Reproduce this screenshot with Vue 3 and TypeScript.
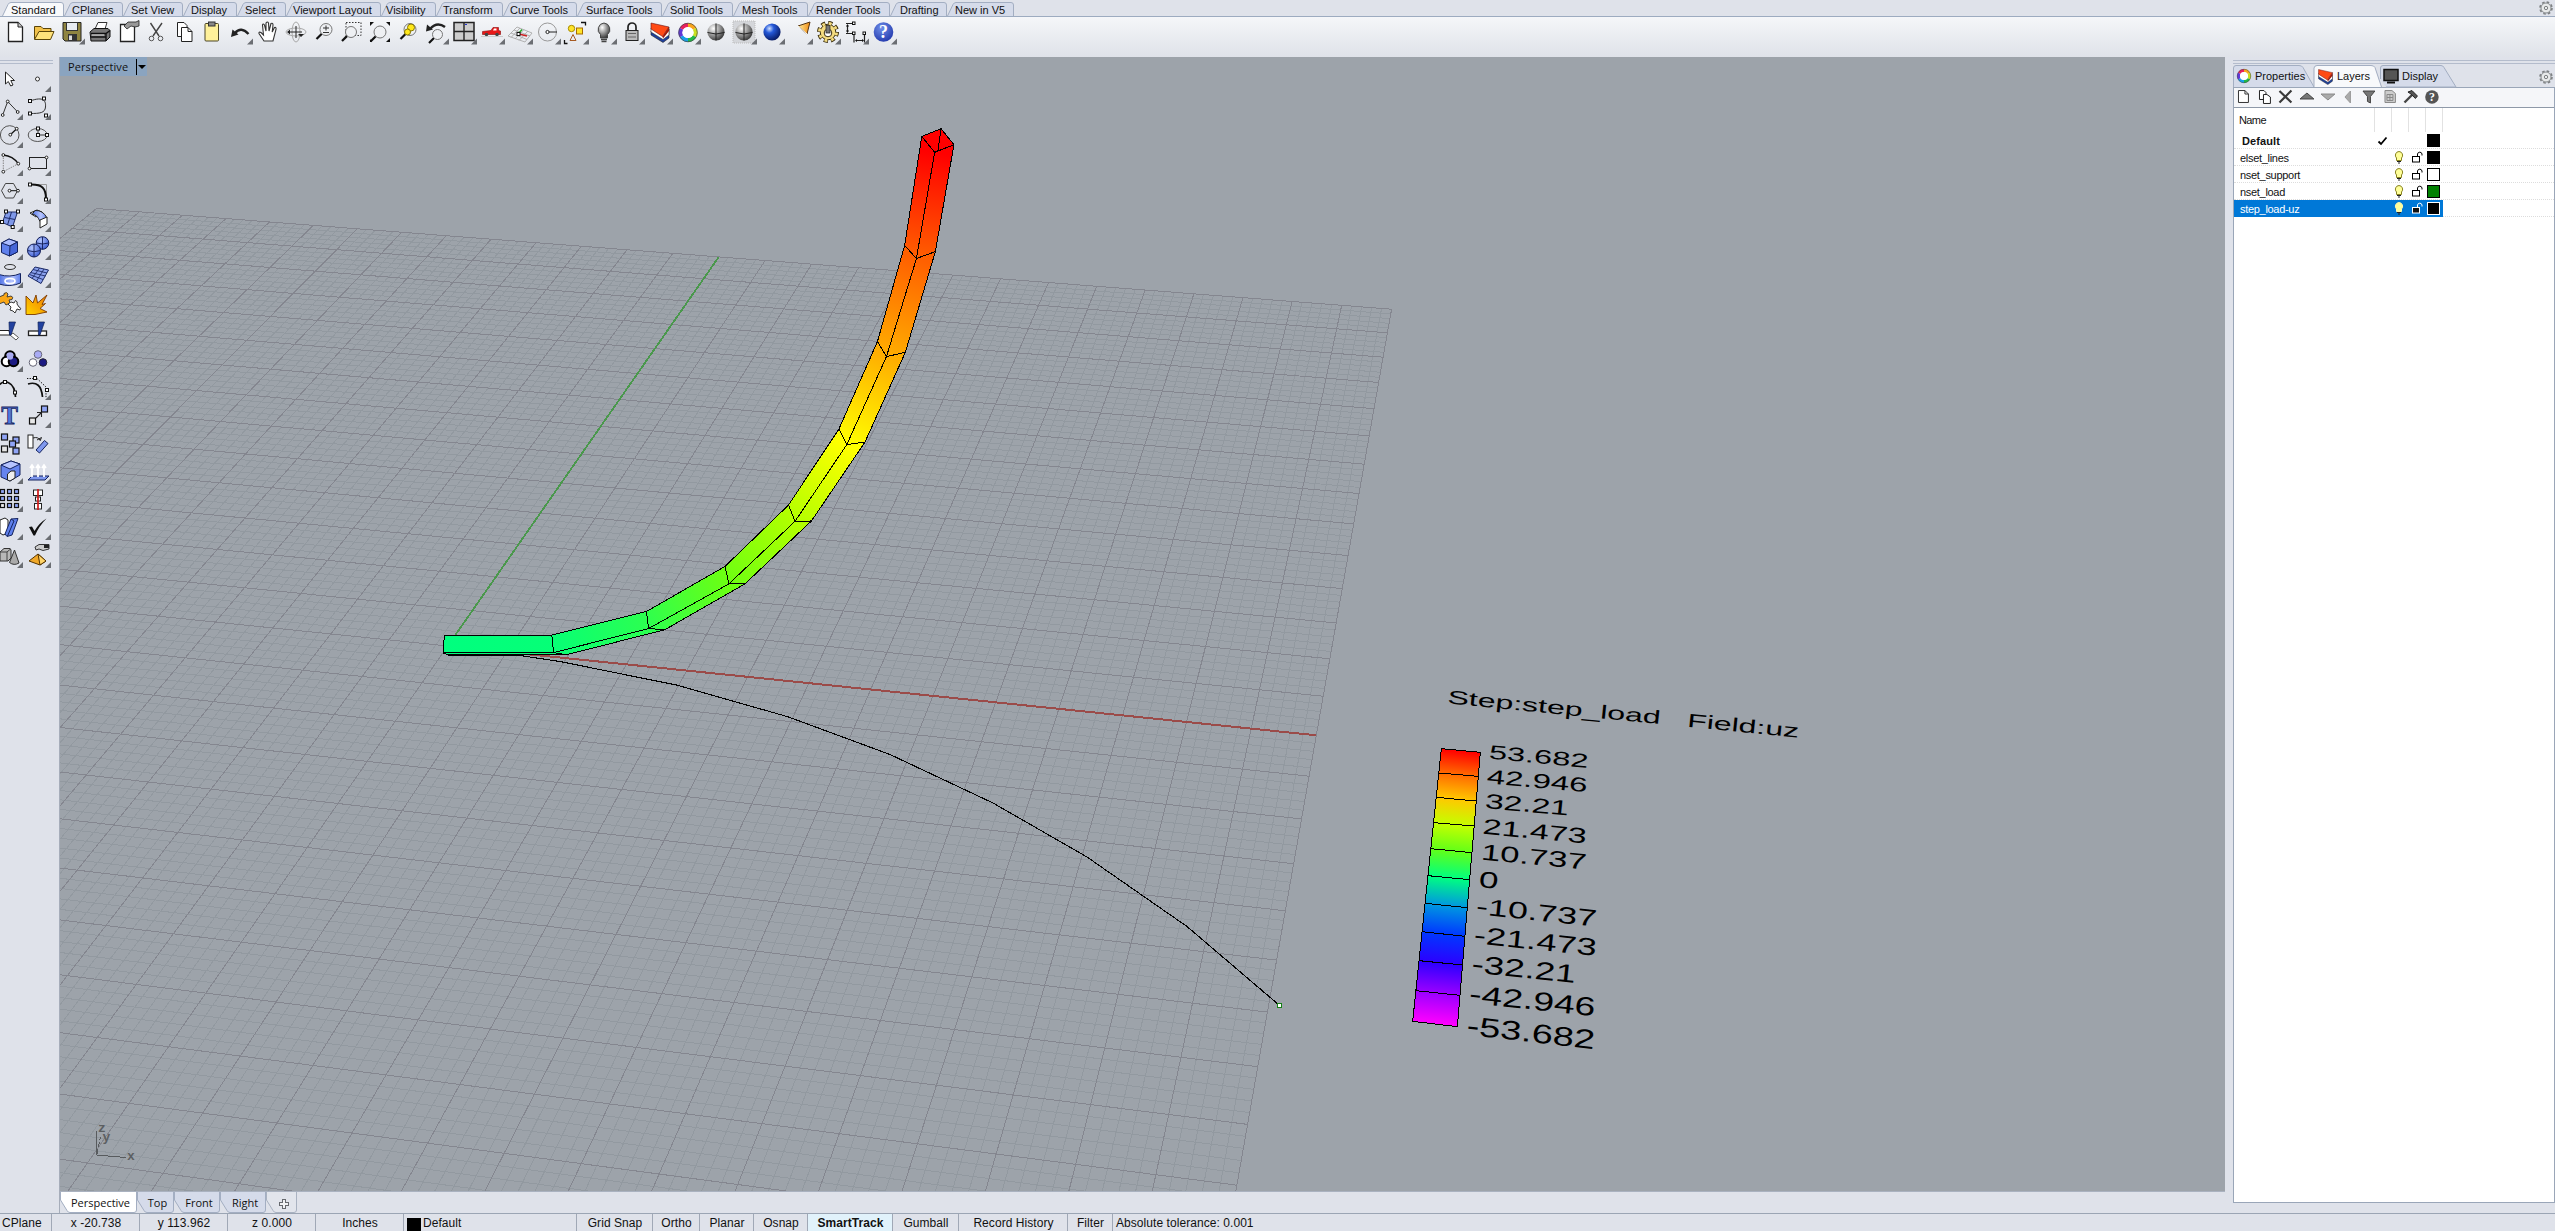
<script setup lang="ts">
type Pt = [number, number]

/* ---------- ribbon tabs ---------- */
const tabs: { label: string; w: number; pad: number }[] = [
  { label: 'Standard', w: 62, pad: 9 },
  { label: 'CPlanes', w: 59, pad: 8 },
  { label: 'Set View', w: 60, pad: 8 },
  { label: 'Display', w: 54, pad: 8 },
  { label: 'Select', w: 49, pad: 8 },
  { label: 'Viewport Layout', w: 95, pad: 7 },
  { label: 'Visibility', w: 55, pad: 5 },
  { label: 'Transform', w: 67, pad: 7 },
  { label: 'Curve Tools', w: 74, pad: 7 },
  { label: 'Surface Tools', w: 85, pad: 9 },
  { label: 'Solid Tools', w: 71, pad: 8 },
  { label: 'Mesh Tools', w: 75, pad: 9 },
  { label: 'Render Tools', w: 82, pad: 8 },
  { label: 'Drafting', w: 57, pad: 10 },
  { label: 'New in V5', w: 67, pad: 8 },
]
const tabPath = (w: number) => `M0.5 16L6 4.5Q7 2.5 9 2.5H${w - 3}Q${w - 0.5} 2.5 ${w - 0.5} 5V16`

/* ---------- icon artwork ---------- */
const tri = '<path d="M27 18.5V24.5H21Z" fill="#6b6e73"/>'
const triS = '<path d="M27 21V27H21Z" fill="#6b6e73"/>'
const lens = (x: number, y: number, r: number) =>
  `<path d="M${x - r * 0.7} ${y + r * 0.7}L${x - r - 3.5} ${y + r + 3.5}" stroke="#111" stroke-width="2.2"/><circle cx="${x}" cy="${y}" r="${r}" fill="#eef0f3" stroke="#777"/>`
const ball = (fill: string) =>
  `<circle cx="14" cy="12" r="8.6" fill="url(#${fill})"/>`
const layersArt =
  '<path d="M5 11V15L17 22.500L23 18V9L17 17Z" fill="#1d3f9c" stroke="#222" stroke-width=".6"/><path d="M5 8V12L17 19.500L23 15V7L17 14Z" fill="#fff" stroke="#333" stroke-width=".6"/><path d="M5 3V9L16.500 16.500L23 7Z" fill="#ff4a14" stroke="#611" stroke-width=".6"/><path d="M16.500 16.500L23 7V11L17 18.500Z" fill="#a01808"/>'
const wheelArt =
  '<g fill="none" stroke-width="4"><path d="M14 5A7.500 7.500 0 0 1 20.500 8.700" stroke="#f9a51c"/><path d="M20.500 8.700A7.500 7.500 0 0 1 20.500 16.200" stroke="#c8e020"/><path d="M20.500 16.200A7.500 7.500 0 0 1 14 20" stroke="#20b848"/><path d="M14 20A7.500 7.500 0 0 1 7.500 16.200" stroke="#18a0e8"/><path d="M7.500 16.200A7.500 7.500 0 0 1 7.500 8.700" stroke="#6038d8"/><path d="M7.500 8.700A7.500 7.500 0 0 1 14 5" stroke="#e8205c"/></g><circle cx="14" cy="12.500" r="5.600" fill="#fff"/><circle cx="14" cy="12.500" r="9.300" fill="none" stroke="#444" stroke-width=".7"/>'

const toolIcons: string[] = [
  '<path d="M6.500 2.500H16L20.500 7V21.500H6.500Z" fill="#fff" stroke="#222" stroke-width="1.300"/><path d="M16 2.500V7H20.500" fill="#ccc" stroke="#222"/>',
  '<path d="M4.500 19V6.500H11L13 8.500H21V12" fill="#f2c24a" stroke="#5a4408"/><path d="M4.500 19.500L9 11.500H24L20.500 19.500Z" fill="#ffe27a" stroke="#5a4408"/>',
  '<path d="M5 2.500H23V21H7L5 19Z" fill="#8f8440" stroke="#222"/><rect x="8.500" y="2.500" width="11" height="8" fill="#e8ecf2" stroke="#333"/><rect x="10" y="14" width="9" height="7" fill="#333"/><rect x="11" y="15.500" width="3" height="4.500" fill="#ddd"/>' + tri,
  '<path d="M9 9L12 2.500H21L19 9Z" fill="#fff" stroke="#333"/><path d="M4 12L8 8.500H22L24 10.500V17L20 21H5Z" fill="#777" stroke="#111"/><path d="M5 13.500H20L24 10.500M5 17H20M20 13V21" stroke="#111" fill="none" stroke-width="1.400"/><path d="M6 15H18" stroke="#ddd"/>',
  '<path d="M6.500 4.500H20.500V21.500H6.500Z" fill="#fff" stroke="#222" stroke-width="1.300"/><path d="M10 6L14 2H22L25 .5V6L21 7L17 6L13 9Z" fill="#999" stroke="#222" stroke-width=".8"/>',
  '<path d="M8.500 3L17 16M20 3L11 16" stroke="#444" stroke-width="1.400"/><circle cx="9.500" cy="18.500" r="2.300" fill="none" stroke="#555"/><circle cx="18.500" cy="18.500" r="2.300" fill="none" stroke="#555"/>',
  '<path d="M7.500 2.500H14L17 5.500V16.500H7.500Z" fill="#fff" stroke="#222"/><path d="M11.500 7.500H18L22 11.500V21.500H11.500Z" fill="#fff" stroke="#222"/><path d="M18 7.500V11.500H22" fill="none" stroke="#222"/>',
  '<rect x="7" y="3.500" width="13.500" height="17.500" rx="1" fill="#fff19a" stroke="#4a4526"/><rect x="10.500" y="2" width="6.500" height="4" fill="#888" stroke="#333"/>',
  '<path d="M9 13Q15 6 22.500 14" fill="none" stroke="#222" stroke-width="2.400"/><path d="M5 17L6.500 9.500L12.500 14.500Z" fill="#222"/>' + tri,
  '<path d="M10 21L5 13.500Q4.500 11.500 7 12.500L9.500 15L8.500 5Q9 3 10.500 5L12 11L12 3Q13.500 1 14.500 3L15 11L17 3.500Q19 2.500 19 5L18.200 12L20.500 7.500Q22.500 7 22 9.500L19 21Z" fill="#fff" stroke="#333" stroke-width="1.100"/>',
  '<ellipse cx="14" cy="12" rx="10" ry="4" fill="none" stroke="#aaa"/><ellipse cx="14" cy="12" rx="4" ry="10" fill="none" stroke="#aaa"/><path d="M8 12H20M14 6V18" stroke="#222"/><path d="M8 9.500V14.500L5 12ZM16 14H22L19 17Z" fill="#222"/>',
  lens(16, 9.500, 6) + '<path d="M13 8H19M16 5.500V10.500M13 12.500H19" stroke="#333"/>',
  '<rect x="8" y="2.500" width="15" height="13" fill="none" stroke="#333" stroke-dasharray="1.500 1.500"/>' + lens(13, 12, 5.500),
  lens(14, 12, 6) + '<path d="M4 2H8L4 6ZM24 2H20L24 6ZM24 22H20L24 18ZM4 22H6L4 19Z" fill="#111"/>',
  lens(16, 9.500, 6) + '<circle cx="17" cy="7.500" r="3.500" fill="#ffe81a" stroke="#887700"/><circle cx="13.500" cy="12" r="3" fill="#ffe81a" stroke="#887700"/>',
  lens(15.500, 14.500, 5) + '<path d="M8 9Q15 1 23 7" fill="none" stroke="#222" stroke-width="2.400"/><path d="M4 11.500L5 4.500L11 9.500Z" fill="#222"/>' + tri,
  '<rect x="4" y="2.500" width="20" height="18" fill="#ccc" stroke="#222" stroke-width="1.500"/><path d="M14 2.500V20.500M4 11.500H24" stroke="#222" stroke-width="1.400"/><path d="M15 4.500H17" stroke="#23c"/>' + tri,
  '<path d="M4.500 14.500V11.500L13 10.500L15 7.500H20.500V10.500L22.500 11V14.500Z" fill="#e81818" stroke="#8a0808" stroke-width=".6"/><path d="M16 8.500H18.500V10.500H15Z" fill="#fff"/><circle cx="8.500" cy="14.500" r="1.800" fill="#444"/><circle cx="19" cy="14.500" r="1.800" fill="#444"/><path d="M3 16.500H25" stroke="#bbb" stroke-width=".7"/>' + tri,
  '<path d="M2 16L11 7L26 13L19 22ZM5 17.500L14 8M9 19L18 9.500M13 20.500L22 11M5 13L21 19.500M8 10L24 16" fill="none" stroke="#aaa" stroke-width=".9"/><path d="M13 14L21 16" stroke="#c22" stroke-width="1.400"/><path d="M13 13L16 9.500" stroke="#2a2" stroke-width="1.400"/><rect x="11" y="12.500" width="3" height="3" fill="#fff" stroke="#111"/>' + tri,
  '<circle cx="13.500" cy="12" r="9" fill="none" stroke="#999"/><path d="M13.500 12H23" stroke="#222"/><circle cx="13.500" cy="12" r="1.600" fill="#fff" stroke="#222"/>' + tri,
  '<circle cx="9.500" cy="8.500" r="3.200" fill="#ffe428" stroke="#a68a00"/><rect x="14.500" y="8" width="6" height="6" fill="#ffe428" stroke="#a66a00"/><path d="M11 14.500L14 20.500H8Z" fill="none" stroke="#a65a22"/><path d="M19 2.500H23.500V5.500M2.500 20V23.500H5.500" fill="none" stroke="#111" stroke-width="1.300"/>' + tri,
  '<path d="M14 3A6.500 6.500 0 0 1 17.500 14.500V18H10.500V14.500A6.500 6.500 0 0 1 14 3Z" fill="url(#gray)" stroke="#444"/><path d="M11 19.500H17M11.500 21.500H16.500" stroke="#444" stroke-width="1.500"/>' + tri,
  '<path d="M10 11V7A4 4 0 0 1 18 7V11" fill="none" stroke="#222" stroke-width="1.700"/><rect x="8" y="10.500" width="12" height="10" fill="#bbb" stroke="#222"/><path d="M10 13.500H18M10 17H18" stroke="#666"/>' + tri,
  layersArt + tri,
  wheelArt + tri,
  ball('gray') + '<path d="M14 3.500V20.500M5.500 12.500Q14 15.500 22.500 12.500" fill="none" stroke="#222"/>',
  '<rect x="3" y="1" width="22" height="22" fill="#d4d6da" stroke="#bbb" stroke-dasharray="1 1"/>' + ball('gray') + '<path d="M14 3.500V20.500M5.500 12.500Q14 15.500 22.500 12.500" fill="none" stroke="#222"/>' + tri,
  ball('blue') + tri,
  '<path d="M12 6L24 2L21 14Z" fill="url(#orange)" stroke="#553311"/><path d="M12 6L21 14" stroke="#fff"/>' + tri,
  '<circle cx="14" cy="12" r="8.800" fill="none" stroke="#3a2e10" stroke-width="4.400" stroke-dasharray="4 2.910"/><circle cx="14" cy="12" r="7.800" fill="#f4dc80" stroke="#3a2e10"/><circle cx="14" cy="12" r="8.600" fill="none" stroke="#f4dc80" stroke-width="2.800" stroke-dasharray="2.800 3.950" stroke-dashoffset="-.6"/><circle cx="14" cy="13" r="3.800" fill="#fff" stroke="#3a2e10"/><rect x="12" y="5.500" width="4" height="7.500" fill="#777" stroke="#222" stroke-width=".7"/>' + tri,
  '<path d="M4 3.500H11M4 13.500H11M5.500 5V12M12 13V22.500M22.500 13V22.500M14 20.500H21" fill="none" stroke="#222" stroke-width="1.200"/><path d="M5.500 4L4 6.500H7ZM5.500 13L4 10.500H7ZM13 20.500L15 19V22ZM22 20.500L20 19V22Z" fill="#111"/><g fill="#fff" stroke="#111"><rect x="10.500" y="2" width="2.500" height="2.500"/><rect x="10.500" y="12" width="2.500" height="2.500"/><rect x="21" y="12" width="2.500" height="2.500"/></g>' + tri,
  '<circle cx="13.500" cy="12" r="9.800" fill="url(#help)"/><text x="13.500" y="18" text-anchor="middle" font-family="Liberation Serif, serif" font-weight="bold" font-size="18" fill="#fff">?</text>' + tri,
]

const sq = (x: number, y: number) => `<rect x="${x - 1.5}" y="${y - 1.5}" width="3" height="3" fill="#fff" stroke="#111"/>`
const dot = (x: number, y: number) => `<circle cx="${x}" cy="${y}" r="1.400" fill="#fff" stroke="#111" stroke-width=".9"/>`
const bx = (x: number, y: number, f: string, s = 6) => `<rect x="${x}" y="${y}" width="${s}" height="${s}" fill="${f}" stroke="#111" stroke-width="1.200"/>`
const B = '#8fa4f6'

const sideIcons: string[][] = [
  [
    '<path d="M9.500 7V19L12.300 16.500L14.700 21L17 20L14.800 15.500H18.500Z" fill="#fff" stroke="#222"/>',
    '<circle cx="13.500" cy="14" r="2" fill="#fff" stroke="#333"/>' + triS,
  ],
  [
    '<path d="M6.700 22L11.700 8.500L21.700 19" fill="none" stroke="#333"/>' + dot(6.700, 22) + dot(11.700, 8.500) + dot(21.700, 19) + triS,
    '<path d="M6 8C20 3 22 8 21.500 14S16 20.500 6 20.500" fill="none" stroke="#333"/>' + sq(6, 8) + sq(20, 5.500) + sq(6, 20.500) + sq(22, 22.500) + triS,
  ],
  [
    '<circle cx="13.700" cy="14" r="9.300" fill="none" stroke="#555"/><path d="M14.300 13.700L20.700 7.700" stroke="#111" stroke-width="1.200"/>' + dot(14.300, 13.700) + dot(20.700, 7.700) + triS,
    '<ellipse cx="13.700" cy="14" rx="9.500" ry="6.500" fill="none" stroke="#555"/><path d="M14 7.500V14H23" stroke="#333" fill="none"/>' + sq(14, 7.500) + sq(14, 14) + sq(23, 14) + triS,
  ],
  [
    '<path d="M7.300 6Q17 7 22.300 14.700" fill="none" stroke="#111" stroke-width="1.300"/><path d="M7.300 6V22.700L22.300 14.700" fill="none" stroke="#888" stroke-dasharray="1.500 1"/>' + dot(7.300, 6) + dot(7.300, 22.700) + dot(22.300, 14.700) + triS,
    '<rect x="5.500" y="8.500" width="17" height="11" fill="none" stroke="#222"/>' + dot(5.500, 19.500) + dot(22.500, 8.500) + triS,
  ],
  [
    '<path d="M5.500 13.700L9.500 6.500H17.500L21.500 13.700L17.500 21H9.500Z" fill="none" stroke="#444"/><path d="M13.500 13.700H22" stroke="#111"/>' + dot(13.500, 13.700) + dot(22, 13.700) + triS,
    '<path d="M7 7.500H22.500V21" fill="none" stroke="#999"/><path d="M6 7.500C18 7 22 11 22 22" fill="none" stroke="#111" stroke-width="1.900"/>' + sq(6, 7.500) + sq(22, 22.500) + triS,
  ],
  [
    '<path d="M10 7H21.500L16.500 22L6.500 17.500Z" fill="#7f98e8" stroke="#1c2a66"/><path d="M15.500 7L11.500 20M8.500 12.500L19 14.500" stroke="#1c2a66"/>' + sq(10, 6.500) + sq(22, 6.500) + sq(16.700, 22) + sq(6, 17) + triS,
    '<path d="M6 8L13 5L18 7L12 12Z" fill="#fff" stroke="#222"/><path d="M11 5.500Q19 5 23 13L16 16.500Q13 9 8 9.500Z" fill="url(#cube)" stroke="#222"/><path d="M16 15L23 12V19L16 23Z" fill="#fff" stroke="#222"/>' + triS,
  ],
  [
    '<path d="M5.500 10L13 6L21.500 9V19L13.500 23L5.500 19.500Z" fill="#5f80ec" stroke="#14235e"/><path d="M5.500 10L13 6L21.500 9L14 13Z" fill="#a9bbff" stroke="#14235e"/><path d="M14 13L21.500 9V19L13.500 23Z" fill="#4666d8" stroke="#14235e"/>' + triS,
    '<circle cx="18.500" cy="10" r="6.300" fill="url(#blueS)" stroke="#111c55"/><circle cx="10" cy="17.500" r="6.500" fill="url(#blueS)" stroke="#111c55"/><path d="M18.500 4V16.500M12.500 10Q18.500 12 24.500 10M10 11V24M3.500 17.500Q10 20 16.500 17.500" stroke="#111c55" stroke-width=".9" fill="none"/>' + triS,
  ],
  [
    '<ellipse cx="14" cy="6" rx="5.500" ry="2.500" fill="none" stroke="#333"/><path d="M3 13.500Q14 17 24.500 12.500V22Q14 26.500 3 23Z" fill="url(#cube)" stroke="#14235e"/><ellipse cx="14" cy="20" rx="5" ry="2.500" fill="none" stroke="#fff" stroke-width="1.700"/>' + triS,
    '<path d="M4 15L11 6L24.500 9L17 22.500Z" fill="#8ba2ee" stroke="#1c2a66"/><path d="M8 17.500L15.500 7M12.500 20L20 8M6.500 11.500L21.500 15M9 8.500L23 12M5.500 13.500L19 18.500" stroke="#1c2a66" stroke-width=".9"/>' + triS,
  ],
  [
    '<path d="M3 8L8 6L8 4.500Q11 2.500 12 5L11 8L15 7Q18 8 16 10.500L13 11L14 14L10 16L8 13L3 15Z" fill="#f9a616" stroke="#333" stroke-width=".9"/><path d="M12 15L15 13L18 14L19.500 11.500Q22 12.500 21 15L23 18Q26 19 24 21L21 20L19 24L17 22L14 21L15 18Z" fill="#fff" stroke="#222" stroke-width=".9"/>',
    '<path d="M2 7L9 14L12 6L13.500 14L23 6L18 15.500L21.500 14.500L16 19.500L23 23L11 25.500H2Z" fill="url(#burst)" stroke="#7a3a00" stroke-width=".9"/>',
  ],
  [
    '<path d="M3 13.500H13L14 18H3Z" fill="#fff" stroke="#222"/><path d="M17 16L22.500 20.500L20 23L14 18Z" fill="#fff" stroke="#555"/><path d="M13 5H19.500L15 18H13.500Z" fill="#2242a0" stroke="#0f1f55" stroke-width=".7"/>',
    '<rect x="4.500" y="14" width="18" height="4.500" fill="#fff" stroke="#222" stroke-width="1.300"/><path d="M14 5H20.500L16 18H14.500Z" fill="#2242a0" stroke="#0f1f55" stroke-width=".7"/>',
  ],
  [
    '<circle cx="14" cy="11" r="4.800" fill="#b4b6f4" stroke="#000" stroke-width="2"/><circle cx="10.500" cy="16.500" r="4.800" fill="#fff" stroke="#000" stroke-width="2"/><circle cx="17.500" cy="16.500" r="4.800" fill="#1b1a82" stroke="#000" stroke-width="2"/><circle cx="14" cy="11.500" r="3.200" fill="#a7a9f0"/>' + triS,
    '<circle cx="14" cy="9.500" r="3.800" fill="#a9abf4" stroke="#667"/><circle cx="9" cy="17.500" r="3.800" fill="#fff" stroke="#667"/><circle cx="19" cy="17.500" r="3.800" fill="#1b1a82" stroke="#223"/>',
  ],
  [
    '<path d="M3 12Q8 7 13 10Q19 13 19.500 24" fill="none" stroke="#111" stroke-width="1.700"/>' + sq(9, 9) + sq(19, 19.500),
    '<path d="M3 5.500H13L22 14V25" fill="none" stroke="#111" stroke-dasharray="1.300 1.300"/><path d="M4 11Q17 7 18.500 24" fill="none" stroke="#111" stroke-width="1.700"/>' + sq(11, 5) + sq(23, 17) + triS,
  ],
  [
    '<text x="13.500" y="23" text-anchor="middle" font-family="Liberation Serif, serif" font-weight="bold" font-size="25" fill="#5377dd" stroke="#14235e" stroke-width=".8">T</text>',
    bx(5.500, 17, '#e8e8e8') + bx(17.500, 5, B) + '<path d="M12 17L17 12M13 11.500H17.500V16" fill="none" stroke="#222" stroke-width="1.100"/>' + triS,
  ],
  [
    bx(5.500, 5, B) + bx(17, 8, B) + bx(13.500, 12, B) + bx(5.500, 17, '#e4e4e4') + bx(17, 19, B),
    '<rect x="4" y="6" width="5" height="13" fill="#fff" stroke="#222"/><path d="M9 9Q14 7.500 16 11M16 12L17.500 8.500L13 11" fill="none" stroke="#222"/><path d="M12 21L20.500 11.500L24 14.500L15.500 24Z" fill="#7f98ee" stroke="#14235e"/>',
  ],
  [
    '<path d="M5 8L15 4L24 7V18L14 24L5 20Z" fill="#6684ee" stroke="#14235e"/><path d="M5 8L15 4L24 7L14 12Z" fill="#b6c4ff" stroke="#14235e"/><path d="M11.500 17L15 14H19V21L14 24L11.500 23Z" fill="#eee" stroke="#222"/>' + triS,
    '<path d="M4 23L8 19H25L21 23Z" fill="#7f98ee" stroke="#14235e"/><path d="M8 20V8M14 20V8M20 20V8M6 11L8 8L10 11M12 11L14 8L16 11M18 11L20 8L22 11" stroke="#fff" stroke-width="1.800" fill="none"/>' + triS,
  ],
  [
    [4.500, 11.500, 18.500].map((x) => [4.500, 11.500, 18.500].map((y) => bx(x, y, x < 6 && y > 15 ? '#eee' : '#8fa6f8', 4)).join('')).join('') + triS,
    '<rect x="9.500" y="5" width="9" height="5.500" fill="#fff" stroke="#222"/><rect x="11.500" y="12" width="5" height="4" fill="#fff" stroke="#222"/><rect x="10.500" y="18.500" width="7" height="5.500" fill="#fff" stroke="#222"/><path d="M14 4V25" stroke="#d01818" stroke-width="1.700"/>' + triS,
  ],
  [
    '<path d="M4 7L9 5L12 7V20L7 22L4 20Z" fill="#fff" stroke="#222"/><path d="M15 6L22 5.500L16 22L11 23.500L9 21Z" fill="#5f80ec" stroke="#14235e"/><path d="M15 6L18 8L11.500 23" stroke="#14235e" fill="none"/>' + triS,
    '<path d="M5 14L8 13.500L10.500 18Q15 10 22.500 5.500Q15 13 11 22.500H9.500Z" fill="#111"/>' + triS,
  ],
  [
    '<path d="M4 11L8 7.500H14L15 9V17L12 20H4Z" fill="#b8b8b8" stroke="#333"/><path d="M4 11H11L14.500 8M11 11V20" stroke="#444" fill="none"/><path d="M18.500 9L23 22Q18 25 13.500 21.500Z" fill="#aaa" stroke="#333"/>' + triS,
    '<path d="M5 20L14 13L22 20L16 24Z" fill="#f0a828" stroke="#553300"/><path d="M14 13L22 20L16 24Z" fill="#ffd468" stroke="#553300"/><path d="M11 6L15 3.500H25V8L19 9.500L15 8L12 9Z" fill="#ccc" stroke="#222" stroke-width=".9"/><path d="M20 4H25V7H20Z" fill="#222"/>' + triS,
  ],
]

const gearArt =
  '<g fill="none" stroke="#7d8082"><circle cx="8" cy="8" r="6" stroke-width="1.600" stroke-dasharray="2.600 2.100"/><circle cx="8" cy="8" r="5" fill="#e8eaea" stroke-width=".9"/><circle cx="8" cy="8" r="1.700"/></g>'

/* ---------- perspective ground grid ---------- */
const HALF = 14
// world (u, v) in major cells  ->  viewport pixels
const anchors: { w: Pt; s: Pt }[] = [
  { w: [-14, 14], s: [96.7, 208.3] },
  { w: [-7, 14], s: [401.5, 232.1] },
  { w: [0, 14], s: [718.7, 257.1] },
  { w: [8, 14], s: [1096.7, 286.5] },
  { w: [14, 14], s: [1391.7, 309.4] },
  { w: [14, 7], s: [1359, 493] },
  { w: [14, 0], s: [1316.3, 735] },
  { w: [14, -9], s: [1236.8, 1185.3] },
  { w: [0, 0], s: [447.8, 646.4] },
]

function solve(m: number[][]): number[] {
  const n = m.length
  for (let i = 0; i < n; i++) {
    let p = i
    for (let r = i + 1; r < n; r++) if (Math.abs(m[r][i]) > Math.abs(m[p][i])) p = r
    ;[m[i], m[p]] = [m[p], m[i]]
    for (let r = 0; r < n; r++) {
      if (r === i) continue
      const f = m[r][i] / m[i][i]
      for (let c = i; c <= n; c++) m[r][c] -= f * m[i][c]
    }
  }
  return m.map((row, i) => row[n] / row[i])
}

// least-squares homography: normal equations of the stacked anchor rows
const rows = anchors.flatMap(({ w: [u, v], s: [x, y] }) => [
  [u, v, 1, 0, 0, 0, -x * u, -x * v, x],
  [0, 0, 0, u, v, 1, -y * u, -y * v, y],
])
const normal = Array.from({ length: 8 }, (_, i) =>
  Array.from({ length: 9 }, (_, j) => rows.reduce((sum, r) => sum + r[i] * r[j], 0)),
)
const H = solve(normal)
function project(u: number, v: number): Pt {
  const d = H[6] * u + H[7] * v + 1
  return [(H[0] * u + H[1] * v + H[2]) / d, (H[3] * u + H[4] * v + H[5]) / d]
}
const seg = (a: Pt, b: Pt) => `M${a[0].toFixed(1)} ${a[1].toFixed(1)}L${b[0].toFixed(1)} ${b[1].toFixed(1)}`

let minor = ''
let major = ''
for (let i = -HALF * 5; i <= HALF * 5; i++) {
  const k = i / 5
  const d = seg(project(k, -HALF), project(k, HALF)) + seg(project(-HALF, k), project(HALF, k))
  if (i % 5 === 0) major += d
  else minor += d
}
const axisX = seg(project(0, 0), project(HALF, 0))
const axisY = seg(project(0, 0), project(0, HALF))

/* ---------- deformed beam ---------- */
const stations: { a: Pt; b: Pt; c: Pt; color: string }[] = [
  { a: [68, 1472], b: [65, 1521], c: [80, 1526], color: '#00ff7f' },
  { a: [369, 1472], b: [374, 1520], c: [410, 1526], color: '#06ff76' },
  { a: [634, 1407], b: [640, 1454], c: [686, 1457], color: '#2cff50' },
  { a: [854, 1283], b: [865, 1331], c: [910, 1331], color: '#6cff12' },
  { a: [1032, 1114], b: [1050, 1159], c: [1096, 1158], color: '#b2ff00' },
  { a: [1173, 905], b: [1195, 948], c: [1246, 941], color: '#ffff00' },
  { a: [1281, 664], b: [1306, 706], c: [1359, 694], color: '#ffae00' },
  { a: [1357, 400], b: [1390, 436], c: [1443, 417], color: '#ff6000' },
  { a: [1405, 100], b: [1441, 144], c: [1495, 123], color: '#ff0000' },
]
const pts = (...p: Pt[]) => p.map((q) => q.join(',')).join(' ')
const beam = stations.slice(1).map((q, i) => ({ p: stations[i], q, id: `beam${i}` }))

/* ---------- colour legend ---------- */
const leftY = [236, 309, 382, 458, 536, 617, 700, 785, 872, 962, 1054]
const rightY = [247, 319, 393, 468, 548, 629, 713, 799, 885, 976, 1070]
const legendColors = ['#ff0000', '#ff6c00', '#ffc800', '#c4ff00', '#62ff18', '#00ff80', '#0098e0', '#0038ff', '#2c00ff', '#9a00ff', '#ff00ff']
const onLeft = (y: number): Pt => [154 - ((y - 236) * 86) / 818, y]
const onRight = (y: number): Pt => [271 - ((y - 247) * 69) / 823, y]
const legendLines = leftY.map((y, i) => seg(onLeft(y), onRight(rightY[i]))).join('')
const legendStops = leftY.map((y, i) => ({ at: (y - 236) / 818, color: legendColors[i] }))

interface Label { t: string; x: number; y: number; em: number; h: number; slope: number }
const labels: Label[] = [
  { t: '53.682', x: 1488.6, y: 758.6, em: 32.4, h: 19.4, slope: 0.093 },
  { t: '42.946', x: 1486.2, y: 783.2, em: 32.9, h: 20, slope: 0.089 },
  { t: '32.21', x: 1484.4, y: 808, em: 33.5, h: 20.7, slope: 0.09 },
  { t: '21.473', x: 1482, y: 833.6, em: 34, h: 21.4, slope: 0.095 },
  { t: '10.737', x: 1480.4, y: 859.5, em: 34.5, h: 22.2, slope: 0.095 },
  { t: '0', x: 1478.2, y: 887, em: 35, h: 22.7, slope: 0.093 },
  { t: '-10.737', x: 1475.5, y: 914, em: 35.6, h: 23.4, slope: 0.105 },
  { t: '-21.473', x: 1473.3, y: 943, em: 36.2, h: 24.2, slope: 0.105 },
  { t: '-32.21', x: 1470.9, y: 972.2, em: 36.7, h: 25, slope: 0.103 },
  { t: '-42.946', x: 1468.4, y: 1002.6, em: 37.2, h: 25.9, slope: 0.107 },
  { t: '-53.682', x: 1466, y: 1034.5, em: 37.8, h: 26.7, slope: 0.115 },
  { t: 'Step:step_load\u00a0\u00a0\u00a0Field:uz', x: 1447, y: 703.2, em: 31.95, h: 18.8, slope: 0.098 },
]
// text lies on the ground plane: sheared along both axes and squashed vertically
const lay = (l: Label) =>
  `matrix(${l.em / 100} ${(l.em / 100) * l.slope} ${(-0.105 * l.h) / 100} ${l.h / 100} ${l.x} ${l.y})`

/* ---------- layer panel ---------- */
const layers = [
  { name: 'Default', color: '#000', current: true, sel: false },
  { name: 'elset_lines', color: '#000', current: false, sel: false },
  { name: 'nset_support', color: '#fff', current: false, sel: false },
  { name: 'nset_load', color: '#008000', current: false, sel: false },
  { name: 'step_load-uz', color: '#000', current: false, sel: true },
]
const panelIcons: string[] = [
  '<path d="M5.500 4.500H12L15.500 8V16.500H5.500Z" fill="#fff" stroke="#333"/><path d="M12 4.500V8H15.500" fill="none" stroke="#333"/>',
  '<path d="M5.500 4.500H10L12 6.500V13.500H5.500Z" fill="#fff" stroke="#222"/><path d="M9.500 8.500H13L16.500 11V17.500H9.500Z" fill="#fff" stroke="#222"/>',
  '<path d="M4.500 5L16.500 16.500M16.500 4.500L4.500 16.500" stroke="#3a3a3a" stroke-width="2.200"/>',
  '<path d="M4 13L11 7L18 13Z" fill="#777" stroke="#444"/>',
  '<path d="M4 8L11 14L18 8Z" fill="#aaa" stroke="#888"/>',
  '<path d="M13.500 5V17L8 11Z" fill="#aaa" stroke="#999"/>',
  '<path d="M5 5H17L12.500 10.500V17L9.500 15.500V10.500Z" fill="#777" stroke="#444"/>',
  '<path d="M6 4.500H13L16.500 7.500V16.500H6Z" fill="#ccc" stroke="#888"/><path d="M8 8.500H14V14.500H8ZM11 8.500V14.500M8 11.500H14" fill="none" stroke="#888"/>',
  '<path d="M4.500 16.500L12 9" stroke="#444" stroke-width="2.400"/><path d="M8 6L12 4.500L17.500 10L15.500 12.500L11 8Z" fill="#555" stroke="#222"/>',
  '<circle cx="11" cy="11" r="6.800" fill="#555"/><text x="11" y="15.200" text-anchor="middle" font-family="Liberation Serif, serif" font-weight="bold" font-size="12" fill="#fff">?</text>',
]

/* ---------- status bar ---------- */
const status: { t: string; w: number; cls?: string }[] = [
  { t: 'CPlane', w: 52, cls: 'first' },
  { t: 'x -20.738', w: 88 },
  { t: 'y 113.962', w: 88 },
  { t: 'z 0.000', w: 88 },
  { t: 'Inches', w: 88 },
  { t: 'Default', w: 173, cls: 'layer' },
  { t: 'Grid Snap', w: 76 },
  { t: 'Ortho', w: 47 },
  { t: 'Planar', w: 54 },
  { t: 'Osnap', w: 54 },
  { t: 'SmartTrack', w: 85, cls: 'on' },
  { t: 'Gumball', w: 66 },
  { t: 'Record History', w: 109 },
  { t: 'Filter', w: 45 },
  { t: 'Absolute tolerance: 0.001', w: 200, cls: 'last' },
]
const views = [
  { t: 'Perspective', w: 77, on: true },
  { t: 'Top', w: 37, on: false },
  { t: 'Front', w: 46, on: false },
  { t: 'Right', w: 46, on: false },
]
</script>

<template>
  <div class="app">
    <svg class="defs" width="0" height="0">
      <defs>
        <radialGradient id="gray" cx=".35" cy=".3" r=".75"><stop offset="0" stop-color="#fff" /><stop offset=".5" stop-color="#999" /><stop offset="1" stop-color="#333" /></radialGradient>
        <radialGradient id="blue" cx=".35" cy=".3" r=".75"><stop offset="0" stop-color="#cfe0ff" /><stop offset=".35" stop-color="#2458d8" /><stop offset="1" stop-color="#06165c" /></radialGradient>
        <radialGradient id="blueS" cx=".35" cy=".3" r=".8"><stop offset="0" stop-color="#b4c6ff" /><stop offset="1" stop-color="#3355d0" /></radialGradient>
        <radialGradient id="help" cx=".4" cy=".3" r=".8"><stop offset="0" stop-color="#6f8ee8" /><stop offset="1" stop-color="#1c32a8" /></radialGradient>
        <linearGradient id="orange"><stop offset="0" stop-color="#fff0a0" /><stop offset="1" stop-color="#f08a10" /></linearGradient>
        <linearGradient id="burst" x1="0" y1="1" x2="1" y2="0"><stop offset="0" stop-color="#ffd400" /><stop offset="1" stop-color="#f07a00" /></linearGradient>
        <linearGradient id="cube"><stop offset="0" stop-color="#4f72e6" /><stop offset=".6" stop-color="#b8c6ff" /><stop offset="1" stop-color="#5f80ec" /></linearGradient>
      </defs>
    </svg>

    <header class="ribbon">
      <div class="tabs">
        <div v-for="(t, i) in tabs" :key="t.label" class="tab" :class="{ active: i === 0 }" :style="{ width: t.w + 'px', paddingLeft: t.pad + 'px' }">
          <svg class="tab-bg" :width="t.w" height="17"><path :d="tabPath(t.w)" /></svg>
          <span>{{ t.label }}</span>
        </div>
        <span class="grow" />
        <svg class="gear" width="16" height="16" v-html="gearArt" />
      </div>
      <div class="tools">
        <svg v-for="(g, i) in toolIcons" :key="i" width="28" height="26" viewBox="0 0 28 26" fill="none" v-html="g" />
      </div>
    </header>

    <div class="body">
      <aside class="side">
        <div class="grip" />
        <div v-for="(row, i) in sideIcons" :key="i" class="side-row">
          <svg v-for="(g, j) in row" :key="j" width="28" height="28" viewBox="0 0 28 28" v-html="g" />
        </div>
      </aside>

      <main class="work">
        <div class="viewport">
          <svg class="scene" width="2165" height="1134" viewBox="60 57 2165 1134">
            <defs>
              <linearGradient v-for="s in beam" :id="s.id" :key="s.id" gradientUnits="userSpaceOnUse" :x1="s.p.b[0]" :y1="s.p.b[1]" :x2="s.q.b[0]" :y2="s.q.b[1]">
                <stop offset="0" :stop-color="s.p.color" /><stop offset="1" :stop-color="s.q.color" />
              </linearGradient>
              <linearGradient id="legend" gradientUnits="userSpaceOnUse" x1="154" y1="236" x2="68" y2="1054">
                <stop v-for="s in legendStops" :key="s.at" :offset="s.at" :stop-color="s.color" />
              </linearGradient>
            </defs>
            <g fill="none" shape-rendering="crispEdges">
              <path :d="minor" stroke="#9299a0" />
              <path :d="major" stroke="#84868f" />
              <path :d="axisY" stroke="#4a984c" stroke-width="1.800" />
              <path :d="axisX" stroke="#9b4b49" stroke-width="2" />
              <path d="M448 655L520 655.500L560 661.500L677.700 685.300L787.700 716.700L890 754.500L993 803L1087 857L1187 926.500L1279 1005" stroke="#000" stroke-width="1.100" />
            </g>
            <rect x="1277.500" y="1003.500" width="4" height="4" fill="#fff" stroke="#148014" shape-rendering="crispEdges" />

            <g transform="translate(420 100) scale(.357143 .363533)" stroke="#000" stroke-linejoin="round" shape-rendering="crispEdges">
              <g v-for="s in beam" :key="s.id" :fill="`url(#${s.id})`">
                <polygon vector-effect="non-scaling-stroke" :points="pts(s.p.b, s.p.c, s.q.c, s.q.b)" />
                <polygon vector-effect="non-scaling-stroke" :points="pts(s.p.a, s.p.b, s.q.b, s.q.a)" />
              </g>
              <polygon vector-effect="non-scaling-stroke" points="1405,100 1459,79 1495,123 1441,144" fill="#f00" />
              <path vector-effect="non-scaling-stroke" d="M1459 79L1450 141" />
            </g>

            <g transform="translate(1390 670) scale(.333333)" shape-rendering="crispEdges">
              <polygon points="154,236 271,247 202,1070 68,1054" fill="url(#legend)" stroke="#000" vector-effect="non-scaling-stroke" />
              <path :d="legendLines" stroke="#000" vector-effect="non-scaling-stroke" />
            </g>
            <text v-for="l in labels" :key="l.t" class="plane-text" :transform="lay(l)">{{ l.t }}</text>

            <g stroke="#585b5e" fill="none" shape-rendering="crispEdges">
              <path d="M96.500 1131V1155L126 1157.500" />
              <path d="M97 1154L100.500 1137" stroke-dasharray="5 2" />
            </g>
            <g class="axis-text"><text x="98" y="1132">z</text><text x="102.500" y="1141">y</text><text x="127" y="1160">x</text></g>
          </svg>
          <div class="title"><span>Perspective</span><i /><b /></div>
        </div>
        <div class="views">
          <div v-for="v in views" :key="v.t" class="view" :class="{ on: v.on }" :style="{ width: v.w + 'px' }">
            <svg class="tab-bg" :width="v.w" height="21"><path :d="`M0.500 0V8L7 18.500Q8 20.500 10 20.500H${v.w - 3}Q${v.w - 0.5} 20.500 ${v.w - 0.5} 18V0`" /></svg>
            <span>{{ v.t }}</span>
          </div>
          <div class="view plus">
            <svg width="31" height="21"><path d="M0.500 0V8L7 18.500Q8 20.500 10 20.500H28Q30.500 20.500 30.500 18V0" fill="#e2e5ec" stroke="#a9b2c1" /><path d="M16.500 7.500H19.500V10.500H22.500V13.500H19.500V16.500H16.500V13.500H13.500V10.500H16.500Z" fill="#f2f3f5" stroke="#66696e" shape-rendering="crispEdges" /></svg>
          </div>
        </div>
      </main>

      <aside class="panel">
        <div class="grip" />
        <div class="ptabs">
          <div class="ptab p1">
            <svg class="tab-bg" width="92" height="22"><path d="M.5 22V3Q.5 .5 3 .5H66Q69 .5 70 2.500L81 22" /></svg>
            <svg width="16" height="16" viewBox="3 2 22 21" v-html="wheelArt" /><span>Properties</span>
          </div>
          <div class="ptab p2">
            <svg class="tab-bg" width="82" height="22"><path class="lit" d="M0 22V3Q.5 .5 3 .5H57Q60 .5 61 2.500L67.500 22" /></svg>
            <svg width="17" height="17" viewBox="3 1 22 22" v-html="layersArt" /><span>Layers</span>
          </div>
          <div class="ptab p3">
            <svg class="tab-bg" width="82" height="22"><path d="M.5 14V3Q.5 .5 3 .5H61Q63 .5 64 2.500L76 22H6" /></svg>
            <svg width="16" height="16" viewBox="0 0 16 16"><rect x="1" y="1.500" width="14" height="11" fill="#555" stroke="#111" stroke-width="1.500" /><path d="M4 14.500H12" stroke="#111" stroke-width="2" /></svg><span>Display</span>
          </div>
          <span class="grow" />
          <svg class="gear" width="16" height="16" v-html="gearArt" />
        </div>
        <div class="pbox">
          <div class="ptools">
            <svg v-for="(g, i) in panelIcons" :key="i" width="20.900" height="20" viewBox="1 2 21 20" v-html="g" />
          </div>
          <div class="phead"><span>Name</span><i /><i /><i /><i /><i /></div>
          <div v-for="l in layers" :key="l.name" class="prow" :class="{ cur: l.current }">
            <div class="pcells" :class="{ sel: l.sel }">
              <span class="pname">{{ l.name }}</span>
              <svg class="cell" width="17" height="17"><path v-if="l.current" d="M4.500 9.500L7 12L12.500 5.500" fill="none" stroke="#000" stroke-width="1.800" /></svg>
              <svg class="cell" width="17" height="17">
                <g v-if="!l.current">
                  <path d="M8 2.500A3.800 3.800 0 0 1 10.500 9V11.500H5.500V9A3.800 3.800 0 0 1 8 2.500Z" fill="#ffff99" :stroke="l.sel ? '#fff8b0' : '#8a8420'" /><path d="M6 12.500H10M7 14H9" stroke="#222" stroke-width="1.200" />
                </g>
              </svg>
              <svg class="cell" width="17" height="17">
                <g v-if="!l.current" :stroke="l.sel ? '#fff' : '#000'"><path d="M9.500 7.500V5A2.300 2.300 0 0 1 14 5V6.500" fill="none" /><rect x="4.500" y="7.500" width="7" height="5.500" :fill="l.sel ? '#111' : '#fff'" /></g>
              </svg>
              <i class="swatch" :style="{ background: l.color }" />
            </div>
          </div>
        </div>
      </aside>
    </div>

    <footer class="status">
      <div v-for="s in status" :key="s.t" class="cellx" :class="s.cls" :style="{ width: s.w + 'px' }"><i v-if="s.cls === 'layer'" /><span>{{ s.t }}</span></div>
    </footer>
  </div>
</template>

<style>
html,
body {
  margin: 0;
  overflow: hidden;
}
</style>

<style scoped>
.app {
  width: 2555px;
  height: 1231px;
  display: flex;
  flex-direction: column;
  background: #dfe2ea;
  font-family: 'Liberation Sans', Arial, sans-serif;
  font-size: 11px;
  color: #111;
  overflow: hidden;
}
.app * {
  box-sizing: border-box;
}
svg {
  display: block;
  flex: none;
}
.defs {
  position: absolute;
}
.grow {
  flex: 1;
}
.ribbon {
  height: 57px;
  flex: none;
}
.tabs {
  display: flex;
  height: 17px;
  padding-left: 2px;
  border-bottom: 1px solid #9dabc0;
}
.tab {
  position: relative;
  height: 17px;
  line-height: 17px;
  padding-top: 2px;
  flex: none;
  white-space: nowrap;
}
.tab-bg {
  position: absolute;
  left: 0;
  top: 0;
  overflow: visible;
}
.tab-bg path {
  fill: #d5dbea;
  stroke: #a3aec2;
}
.tab.active .tab-bg path,
.tab-bg path.lit {
  fill: #f8f9fb;
}
.tab span,
.view span,
.ptab span {
  position: relative;
}
.gear {
  margin: 0 1px 0 0;
}
.tools {
  display: flex;
  height: 40px;
  padding: 3px 0 0 2px;
  background: linear-gradient(#f5f6f9, #edeff3 35%, #dfe2e9);
}
.body {
  display: flex;
  height: 1156px;
  flex: none;
}
.side {
  width: 60px;
  border-right: 1px solid #a6adba;
  padding-top: 3px;
  flex: none;
}
.grip {
  height: 4px;
  border-top: 1px solid #b4bccc;
  border-bottom: 1px solid #b4bccc;
  margin-right: 6px;
}
.side .grip {
  margin-bottom: 0.6px;
}
.side-row {
  display: flex;
  height: 28px;
  margin-left: -4px;
}
.work {
  width: 2165px;
  flex: none;
}
.viewport {
  position: relative;
  height: 1134px;
  background: #9da3aa;
}
.plane-text {
  font: 100px 'Liberation Sans', Arial, sans-serif;
  fill: #000;
}
.axis-text {
  font: bold 13px 'Liberation Mono', monospace;
  fill: #5c5f62;
}
.title {
  position: absolute;
  left: 0;
  top: 0;
  width: 87px;
  height: 19px;
  padding-left: 8px;
  background: #8aa4c0;
  display: flex;
  align-items: center;
  font: 11px 'Open Sans', sans-serif;
  letter-spacing: 0.1px;
}
.title span {
  width: 68px;
}
.title i {
  width: 1px;
  height: 16px;
  background: #000;
}
.title b {
  margin-left: 1px;
  border: 4px solid transparent;
  border-top-color: #000;
  border-bottom: 0;
}
.views {
  display: flex;
  height: 22px;
  border-top: 1px solid #aab2c0;
  font: 11px 'Open Sans', sans-serif;
}
.view {
  position: relative;
  height: 21px;
  line-height: 21px;
  padding-left: 4px;
  text-align: center;
}
.view .tab-bg path {
  fill: #d5dbea;
  stroke: #a3aec2;
}
.view.on .tab-bg path {
  fill: #fff;
}
.view.plus {
  padding: 0;
}
.panel {
  flex: 1;
  padding: 3px 0 0 8px;
}
.panel .grip {
  margin-right: 0;
}
.ptabs {
  display: flex;
  height: 23px;
  padding-top: 1px;
  align-items: flex-start;
}
.ptabs .gear {
  margin-top: 4px;
}
.ptab {
  position: relative;
  display: flex;
  align-items: center;
  height: 22px;
  gap: 3px;
}
.ptab svg:not(.tab-bg) {
  position: relative;
}
.p1 {
  width: 81px;
  padding-left: 3px;
}
.p2 {
  width: 66px;
  padding-left: 3px;
  z-index: 1;
}
.p3 {
  width: 76px;
  padding-left: 3px;
}
.pbox {
  height: 1116px;
  background: #fff;
  border: 1px solid #9aa6b8;
}
.ptools {
  display: flex;
  height: 20px;
  background: #f5f6f9;
  border-bottom: 1px solid #8e99a8;
}
.phead {
  display: flex;
  height: 24px;
  line-height: 24px;
}
.phead span {
  width: 140px;
  padding-left: 5px;
  letter-spacing: -0.6px;
}
.phead i {
  width: 17px;
  border-left: 1px solid #e2e2e2;
}
.prow {
  height: 17px;
  border-bottom: 1px dotted #ddd;
}
.pcells {
  display: flex;
  align-items: center;
  height: 17px;
  width: 209px;
}
.pcells.sel {
  background: #0078d7;
  color: #fff;
}
.pname {
  width: 140px;
  padding-left: 6px;
  letter-spacing: -0.3px;
}
.cur .pname {
  font-weight: bold;
  padding-left: 8px;
  letter-spacing: 0.1px;
}
.swatch {
  width: 13px;
  height: 13px;
  margin-left: 2px;
  border: 1px solid #000;
}
.sel .swatch {
  border-color: #fff;
}
.status {
  display: flex;
  height: 18px;
  border-top: 1px solid #9ba5b4;
  font-size: 12px;
  line-height: 19px;
}
.cellx {
  flex: none;
  border-right: 1px solid #a0a8b6;
  padding-left: 1px;
  text-align: center;
  white-space: nowrap;
  letter-spacing: 0.06px;
}
.cellx.first,
.cellx.last {
  text-align: left;
  padding-left: 2px;
}
.cellx.last {
  padding-left: 3px;
  border: 0;
}
.cellx.on {
  background: #e1f2fb;
  font-weight: bold;
}
.cellx.layer {
  display: flex;
  padding-left: 3px;
}
.cellx.layer i {
  width: 14px;
  height: 14px;
  background: #000;
  margin: 4px 2px 0 0;
}
</style>
